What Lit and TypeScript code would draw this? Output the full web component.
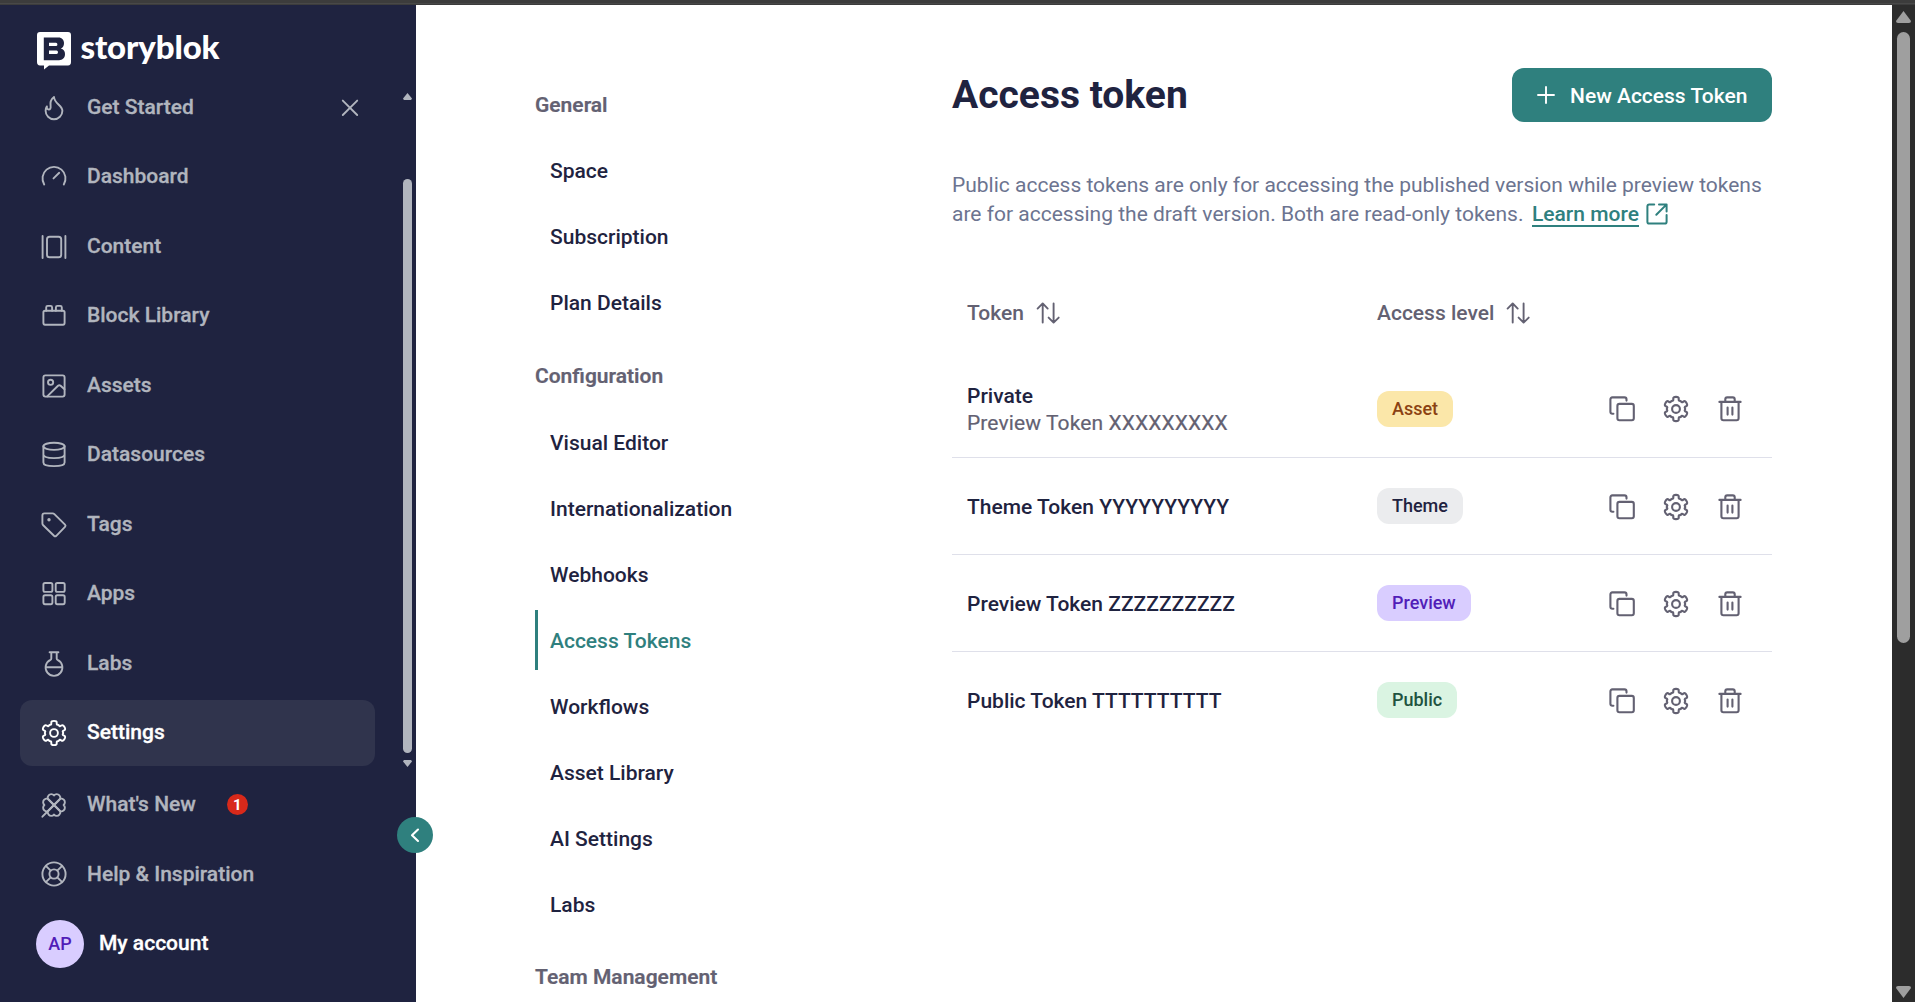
import { LitElement, html, css, svg, nothing } from "lit";
import { customElement } from "lit/decorators.js";

/* Six-tooth gear outline, smoothed through the midpoints of its polygon. */
function gearPath(): string {
  const pts: [number, number][] = [];
  for (let k = 0; k < 6; k++) {
    const base = -90 + k * 60;
    const ring: [number, number][] = [
      [12.5, -14], [12.5, 14], [8.4, 17], [9.6, 30], [8.4, 43],
    ];
    for (const [r, d] of ring) {
      const a = ((base + d) * Math.PI) / 180;
      pts.push([15 + r * Math.cos(a), 15 + r * Math.sin(a)]);
    }
  }
  const mid = (a: [number, number], b: [number, number]) =>
    `${((a[0] + b[0]) / 2).toFixed(2)} ${((a[1] + b[1]) / 2).toFixed(2)}`;
  let d = `M${mid(pts[pts.length - 1], pts[0])}`;
  pts.forEach((p, i) => {
    d += `Q${p[0].toFixed(2)} ${p[1].toFixed(2)} ${mid(p, pts[(i + 1) % pts.length])}`;
  });
  return d + "Z";
}

const lobe = "M15 15L9 9A3.2 3.2 0 0 1 9.6 5.4A3.5 3.5 0 0 1 15 5.4A3.5 3.5 0 0 1 20.4 5.4A3.2 3.2 0 0 1 21 9Z";

const icons: Record<string, unknown> = {
  flame: svg`<path d="M15 4C11.7 6.4 11 9.6 11.6 13.2C11.9 15.4 11.1 16.5 9.7 16.5C8.2 16.5 7.7 15.2 7.9 13.4C6.9 14.9 6.6 16.3 6.6 17.8A8.4 8.4 0 0 0 23.4 17.8C23.4 12.5 15.6 11 15 4Z"/>`,
  gauge: svg`<path d="M5.2 22.4A11.5 11.5 0 1 1 24.8 22.4M14.5 16.4L20.2 10.8"/>`,
  content: svg`<path d="M3.6 4V26M26.4 4V26"/><rect x="8" y="4.7" width="14.2" height="20.6" rx="2.6"/>`,
  block: svg`<rect x="4.4" y="9.7" width="21.2" height="14" rx="1.6"/><path d="M7.2 9.7V6.4Q7.2 4.9 8.7 4.9H11.6Q13.1 4.9 13.1 6.4V9.7M16.9 9.7V6.4Q16.9 4.9 18.4 4.9H21.3Q22.8 4.9 22.8 6.4V9.7"/>`,
  image: svg`<rect x="4.4" y="4.4" width="21.2" height="21.2" rx="2"/><circle cx="11.6" cy="11.3" r="2.6"/><path d="M8.2 25.4L19 14.8Q20.3 13.7 21.6 14.8L25.5 18.3"/>`,
  database: svg`<ellipse cx="15" cy="6.3" rx="10.6" ry="3.6"/><path d="M4.4 6.3V22.4C4.4 24.8 9.2 26.1 15 26.1S25.6 24.8 25.6 22.4V6.3M4.4 14.6C4.4 16.8 9.2 18.1 15 18.1S25.6 16.8 25.6 14.6"/>`,
  tag: svg`<path d="M3.4 5.4Q3.4 3.4 5.4 3.4H13.6Q14.6 3.4 15.4 4.2L26 14.6Q27.1 15.8 26 16.9L17.3 25.8Q16.2 26.9 15 25.8L4.2 15.3Q3.4 14.5 3.4 13.5Z"/><circle cx="10" cy="9.8" r="1.7" fill="currentColor" stroke="none"/>`,
  apps: svg`<rect x="4.4" y="4" width="9" height="8.9" rx="1.6"/><rect x="16.7" y="4" width="9" height="8.9" rx="1.6"/><rect x="4.4" y="16.3" width="9" height="8.9" rx="1.6"/><rect x="16.7" y="16.3" width="9" height="8.9" rx="1.6"/>`,
  flask: svg`<path d="M10.6 3.3H19.4M12.3 3.3V9.6Q12.3 10.4 11.5 10.8A8.4 8.4 0 1 0 18.5 10.8Q17.7 10.4 17.7 9.6V3.3M6.7 18.3H23.3"/>`,
  gear: svg`<path d=${gearPath()}/><circle cx="15" cy="15" r="3.9"/>`,
  clover: svg`<path d=${lobe}/><path d=${lobe} transform="rotate(90 15 15)"/><path d=${lobe} transform="rotate(180 15 15)"/><path d=${lobe} transform="rotate(270 15 15)"/><path d="M9 21L3.4 26.7"/>`,
  help: svg`<circle cx="15" cy="15" r="11.6"/><circle cx="15" cy="15" r="4.6"/><path d="M6.8 6.8L11.7 11.7M23.2 6.8L18.3 11.7M6.8 23.2L11.7 18.3M23.2 23.2L18.3 18.3"/>`,
  close: svg`<path d="M7.8 7.6L22.2 22M22.2 7.6L7.8 22"/>`,
  plus: svg`<path d="M15 7V23M7 15H23"/>`,
  chevron: svg`<path d="M18 9.5L12 15.2L18 21"/>`,
  external: svg`<path d="M12.2 5.4H7.3Q5.4 5.4 5.4 7.3V22.7Q5.4 24.6 7.3 24.6H22.7Q24.6 24.6 24.6 22.7V16M17 5.4H24.6V12.6M24.4 5.6L14.3 15.8"/>`,
  sort: svg`<path d="M9.7 24.6V5.6M4.6 10.6L9.7 5.4L14.7 10.6M20.6 5.4V24.4M15.6 19.6L20.6 24.6L25.7 19.6"/>`,
  copy: svg`<rect x="10.4" y="9.9" width="16.4" height="16.4" rx="2"/><path d="M6.4 19.8H5.4Q3.4 19.8 3.4 17.8V5.4Q3.4 3.4 5.4 3.4H17.5Q19.5 3.4 19.5 5.4V6.6"/>`,
  trash: svg`<path d="M4.4 7.9H25.6M6.4 7.9V24.3Q6.4 26.3 8.4 26.3H21.6Q23.6 26.3 23.6 24.3V7.9M10.3 7.9V5.3Q10.3 3.4 12.2 3.4H17.8Q19.7 3.4 19.7 5.3V7.9M12.6 13.5V20.6M17.4 13.5V20.6"/>`,
};

const icon = (name: string) => html`<svg class="icon" viewBox="0 0 30 30">${icons[name]}</svg>`;

const mainNav = [
  ["flame", "Get Started"], ["gauge", "Dashboard"], ["content", "Content"], ["block", "Block Library"],
  ["image", "Assets"], ["database", "Datasources"], ["tag", "Tags"], ["apps", "Apps"],
  ["flask", "Labs"], ["gear", "Settings"],
];

const settingsNav = [
  { title: "General", items: ["Space", "Subscription", "Plan Details"] },
  {
    title: "Configuration",
    items: ["Visual Editor", "Internationalization", "Webhooks", "Access Tokens", "Workflows", "Asset Library", "AI Settings", "Labs"],
  },
  { title: "Team Management", items: [] as string[] },
];

const tokens = [
  { name: "Private", value: "Preview Token XXXXXXXXX", level: "Asset" },
  { name: "Theme Token YYYYYYYYYY", value: "", level: "Theme" },
  { name: "Preview Token ZZZZZZZZZZ", value: "", level: "Preview" },
  { name: "Public Token TTTTTTTTTT", value: "", level: "Public" },
];

@customElement("app-root")
export class AppRoot extends LitElement {
  static styles = css`
    :host { display: block; font-family: Roboto, "Liberation Sans", sans-serif; color: #1f2340; }
    * { box-sizing: border-box; }
    .window { width: 1915px; height: 1002px; display: flex; flex-direction: column; overflow: hidden; background: #fff; }
    .strip { height: 5px; flex: none; background: #3c3c3c; border-bottom: 1px solid #3c3c3c; box-shadow: inset 0 -1px #484848; }
    .body { flex: 1; display: flex; min-height: 0; }
    .icon { width: 30px; height: 30px; flex: none; display: block; fill: none; stroke: currentColor; stroke-width: 1.9; stroke-linecap: round; stroke-linejoin: round; }

    .sidebar { width: 416px; flex: none; background: #1f2340; position: relative; padding-top: 27px; color: #b1b5be; }
    .logo { height: 43px; padding-left: 37px; display: flex; align-items: flex-start; gap: 9.5px; color: #fff; }
    .logo svg { width: 34px; height: 38px; display: block; }
    .wordmark { font: 900 33px/32px Lato, sans-serif; letter-spacing: -0.15px; margin-top: -2px; }
    .scroller { display: flex; height: 691px; }
    .nav { width: 375px; padding-left: 20px; margin-right: 28px; display: flex; flex-direction: column; gap: 3.45px; flex: none; }
    .item { height: 66px; flex: none; display: flex; align-items: center; padding: 0 10px 0 19px; gap: 18px; border-radius: 12px; font-size: 21px; font-weight: 500; }
    .item .label { padding-bottom: 2px; -webkit-text-stroke: 0.3px currentColor; }
    .item.active { background: #30344d; color: #fff; }
    .spacer { flex: 1; }
    .rail { width: 9px; padding-top: 18px; display: flex; flex-direction: column; align-items: center; }
    .rail .up, .rail .down { flex: none; width: 9px; height: 7px; background: #b1b5be; clip-path: polygon(50% 0, 100% 80%, 90% 100%, 10% 100%, 0 80%); }
    .rail .down { transform: rotate(180deg); }
    .rail .thumb { flex: none; width: 9px; height: 574px; border-radius: 5px; background: #b1b5be; margin: 79px 0 7px; }
    .footer { padding-left: 20px; width: 375px; margin-top: 5.5px; display: flex; flex-direction: column; gap: 3.6px; }
    .footer .item + .item .label { padding-bottom: 0; }
    .count { width: 21px; height: 21px; border-radius: 50%; background: #d8291a; color: #fff; font-size: 15px; font-weight: 700; display: grid; place-items: center; margin: 0 0 0 13px; }
    .account { display: flex; align-items: center; gap: 15px; padding-left: 16px; height: 66px; color: #fff; font-size: 21px; font-weight: 500; }
    .account span:last-child { padding-bottom: 2px; -webkit-text-stroke: 0.3px currentColor; }
    .avatar { width: 48px; height: 48px; border-radius: 50%; background: #d9cdff; color: #511db8; font-size: 18px; font-weight: 500; display: grid; place-items: center; }
    .collapse { position: absolute; left: 397px; top: 812px; width: 36px; height: 36px; border-radius: 50%; background: #2f807e; color: #fff; display: grid; place-items: center; z-index: 1; }
    .collapse .icon { stroke-width: 2.1; }

    .main { flex: 1; display: flex; min-width: 0; padding-left: 119px; }
    .subnav { width: 417px; flex: none; padding-top: 70px; font-size: 21px; font-weight: 500; }
    .group { display: flex; flex-direction: column; gap: 6px; margin-bottom: 13px; }
    .group-title { height: 60px; line-height: 60px; color: #636172; font-weight: 600; -webkit-text-stroke: 0.2px currentColor; }
    .link { height: 60px; line-height: 61px; padding-left: 12px; border-left: 3px solid transparent; font-weight: 500; }
    .group:nth-child(2) .link { line-height: 62px; }
    .link.active { border-color: #2f807e; color: #2f807e; }

    .content { width: 820px; flex: none; padding-top: 63px; }
    .head { display: flex; align-items: center; justify-content: space-between; height: 54px; }
    h1 { margin: 0; font-size: 39px; line-height: 54px; font-weight: 700; }
    .button { width: 260px; height: 54px; border-radius: 12px; background: #2f807e; color: #fff; display: flex; align-items: center; padding-left: 19px; gap: 9px; font-size: 21px; font-weight: 500; white-space: nowrap; }
    .button span { padding-top: 1px; }
    .intro { margin: 49px 0 0; font-size: 21px; line-height: 29px; color: #6c7490; white-space: nowrap; }
    .line2 { display: flex; }
    .learn { display: flex; color: #2f807e; font-weight: 500; margin-left: 8.5px; gap: 3px; height: 29px; align-items: center; }
    .learn .u { height: 26px; line-height: 27px; border-bottom: 2px solid #2f807e; margin-top: -2px; }
    .learn .icon { stroke-width: 2; margin-top: -1px; }
    .row { display: grid; grid-template-columns: 425px 226px auto; height: 97px; align-items: center; border-bottom: 1px solid #dfe0ea; }
    .row:last-child { border-bottom-color: transparent; }
    .cell { padding-left: 15px; font-size: 21px; font-weight: 500; line-height: 27px; padding-top: 2px; }
    .row .cell:nth-child(2) { padding: 0 0 1px; }
    .thead { display: grid; grid-template-columns: 425px auto; margin-top: 57px; height: 54px; align-items: center; color: #636172; font-size: 21px; font-weight: 500; }
    .th { display: flex; align-items: center; gap: 9px; padding-left: 15px; }
    .th + .th { padding-left: 0; }
    .tbody { margin-top: 21px; }
    .sub { font-weight: 400; color: #636172; letter-spacing: 0.1px; -webkit-text-stroke: 0.2px currentColor; }
    .badge { display: inline-block; height: 36px; line-height: 35px; padding: 0 15px; border-radius: 12px; font-size: 18px; font-weight: 500; vertical-align: middle; }
    .asset { background: #fbe7a9; color: #8b4212; }
    .theme { background: #ebecee; color: #1f2340; }
    .preview { background: #d9cdff; color: #511db8; }
    .public { background: #daf4e2; color: #1f5340; }
    .actions { display: flex; gap: 24px; padding-left: 4px; color: #636172; }
    .row + .row .actions { padding-top: 1px; }
    .actions .icon { stroke-width: 2.1; }

    .scrollbar { width: 23px; flex: none; background: #2c2c2c; display: flex; flex-direction: column; align-items: center; justify-content: space-between; padding: 6px 0 4px; }
    .scrollbar svg { width: 15px; height: 12px; fill: #9f9f9f; display: block; }
    .bar { width: 13px; height: 611px; border-radius: 7px; background: #9f9f9f; margin-top: 9px; margin-bottom: auto; }
  `;

  private item([name, label]: string[]) {
    return html`<div class="item ${label === "Settings" ? "active" : ""}">
      ${icon(name)}<span class="label">${label}</span>
      ${label === "Get Started" ? html`<span class="spacer"></span>${icon("close")}` : nothing}
      ${label === "What's New" ? html`<span class="count">1</span>` : nothing}
    </div>`;
  }

  render() {
    return html`<div class="window">
      <div class="strip"></div>
      <div class="body">
        <div class="sidebar">
          <div class="logo">
            <svg viewBox="0 0 34 38">
              <path fill="#fff" d="M3 0H31Q34 0 34 3V30Q34 33.4 31 33.4H12L7 37.4V33.4H3Q0 33.4 0 30V3Q0 0 3 0Z"/>
              <path fill="#1f2340" fill-rule="evenodd" d="M6.8 5.4H21.5C25 5.4 27 8 27 11C27 13.8 26 15.7 23.8 16.6C26.6 17.4 28 19.3 28 22C28 26 25.4 28.2 22 28.2H6.8ZM12 10.8V14H19Q20.4 14 20.4 12.4T19 10.8ZM12 18.6V22H19.6Q21 22 21 20.3T19.6 18.6Z"/>
            </svg>
            <span class="wordmark">storyblok</span>
          </div>
          <div class="scroller">
            <div class="nav">${mainNav.map((n) => this.item(n))}</div>
            <div class="rail"><i class="up"></i><i class="thumb"></i><i class="down"></i></div>
          </div>
          <div class="footer">
            ${this.item(["clover", "What's New"])}${this.item(["help", "Help & Inspiration"])}
            <div class="account"><span class="avatar">AP</span><span>My account</span></div>
          </div>
          <div class="collapse">${icon("chevron")}</div>
        </div>
        <div class="main">
          <div class="subnav">
            ${settingsNav.map((g) => html`<div class="group">
              <div class="group-title">${g.title}</div>
              ${g.items.map((i) => html`<div class="link ${i === "Access Tokens" ? "active" : ""}">${i}</div>`)}
            </div>`)}
          </div>
          <div class="content">
            <div class="head">
              <h1>Access token</h1>
              <div class="button">${icon("plus")}<span>New Access Token</span></div>
            </div>
            <div class="intro">
              <div>Public access tokens are only for accessing the published version while preview tokens</div>
              <div class="line2"><span>are for accessing the draft version. Both are read-only tokens.</span><span class="learn"><span class="u">Learn more</span>${icon("external")}</span></div>
            </div>
            <div class="thead">
              <div class="th"><span>Token</span>${icon("sort")}</div>
              <div class="th"><span>Access level</span>${icon("sort")}</div>
            </div>
            <div class="tbody">
              ${tokens.map((t) => html`<div class="row">
                <div class="cell">${t.name}${t.value ? html`<div class="sub">${t.value}</div>` : nothing}</div>
                <div class="cell"><span class="badge ${t.level.toLowerCase()}">${t.level}</span></div>
                <div class="actions">${icon("copy")}${icon("gear")}${icon("trash")}</div>
              </div>`)}
            </div>
          </div>
        </div>
        <div class="scrollbar">
          <svg viewBox="0 0 15 12"><path d="M7.5 0L15 10Q15 12 13 12H2Q0 12 0 10Z"/></svg>
          <div class="bar"></div>
          <svg viewBox="0 0 15 12"><path d="M7.5 12L15 2Q15 0 13 0H2Q0 0 0 2Z"/></svg>
        </div>
      </div>
    </div>`;
  }
}
